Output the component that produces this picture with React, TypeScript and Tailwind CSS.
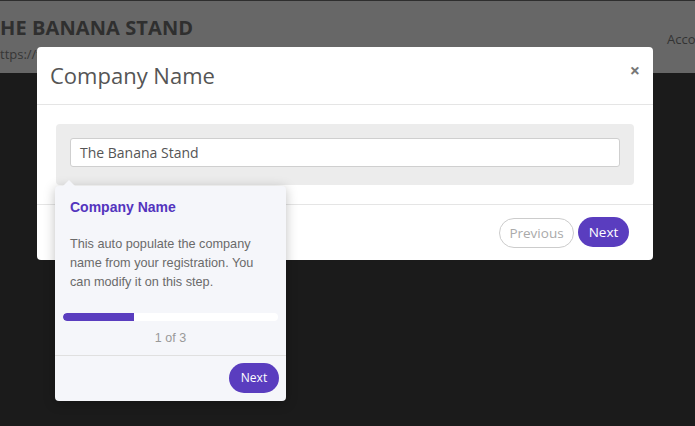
import React from "react";

export default function App() {
  return (
    <div className="relative w-[695px] h-[426px] overflow-hidden bg-[#1b1b1b] [font-family:'Open_Sans',sans-serif]">
      {/* page header (dimmed) */}
      <div className="h-[73px] bg-[#676767] border-t border-[#2e2e2e] flex justify-between">
        <div className="pt-[13px]">
          <div className="text-[20px] leading-[28px] font-bold text-[#2f2f2f] tracking-[0.1px]">HE BANANA STAND</div>
          <div className="text-[13px] leading-[18px] text-[#363636] mt-[3px] whitespace-nowrap">ttps://t</div>
        </div>
        <div className="pt-[29px] text-[13px] leading-[18px] text-[#333] whitespace-nowrap w-[28px] shrink-0">Acco</div>
      </div>

      {/* modal */}
      <div className="absolute left-[37px] top-[47px] w-[616px] h-[213px] bg-white rounded-[4px] flex flex-col">
        <div className="h-[58px] border-b border-[#e5e5e5] flex items-center justify-between pl-[13px] pr-[13px]">
          <div className="text-[22px] text-[#555] leading-[30px] pb-[2px]">Company Name</div>
          <div className="text-[18px] font-bold text-[#777] leading-none pb-[12px]">×</div>
        </div>
        <div className="h-[100px] border-b border-[#e5e5e5] px-[19px] pt-[19px]">
          <div className="h-[61px] bg-[#ececec] rounded-[4px] pl-[14px] pr-[14px] pt-[14px]">
            <div className="h-[29px] bg-white border border-[#cfcfcf] rounded-[3px] flex items-center pl-[9px] text-[14px] text-[#555]">
              The Banana Stand
            </div>
          </div>
        </div>
        <div className="flex-1 flex items-start justify-end pr-[24px] pt-[12px] gap-[4px]">
          <div className="h-[30px] mt-[1px] w-[75px] justify-center rounded-full border border-[#cccccc] text-[#aaa] text-[13.5px] flex items-center">Previous</div>
          <div className="h-[30px] w-[51px] justify-center rounded-full bg-[#5a3dbf] text-white text-[13.5px] flex items-center">Next</div>
        </div>
      </div>

      {/* tour popover */}
      <div className="absolute left-[55px] top-[186px] w-[231px] h-[215px] bg-[#f5f6fa] rounded-[4px] shadow-[0_2px_12px_rgba(0,0,0,0.25)] flex flex-col [font-family:'Liberation_Sans',Arial,sans-serif]">
        <div className="absolute left-[8px] -top-[6px] w-0 h-0 border-l-[6px] border-r-[6px] border-b-[6px] border-l-transparent border-r-transparent border-b-[#f5f6fa]" />
        <div className="px-[15px] pt-[12px]">
          <div className="text-[14px] font-bold text-[#5334be] leading-[18px]">Company Name</div>
          <div className="mt-[19px] text-[12.7px] leading-[19px] text-[#6a6a6a] pr-[4px]">
            This auto populate the company name from your registration. You can modify it on this step.
          </div>
        </div>
        <div className="px-[8px] mt-[21px]">
          <div className="h-[8px] bg-white rounded-full overflow-hidden">
            <div className="h-full w-[71px] bg-[#5a3dbf] rounded-l-full" />
          </div>
          <div className="text-center text-[12.5px] text-[#999] mt-[9px] leading-[17px]">1 of 3</div>
        </div>
        <div className="mt-[8px] border-t border-[#e0e0e0] flex justify-end pr-[7px] pt-[7px]">
          <div className="h-[30px] w-[50px] rounded-full bg-[#5a3dbf] text-white text-[12px] flex items-center justify-center [font-family:'Open_Sans',sans-serif]">Next</div>
        </div>
      </div>
    </div>
  );
}
